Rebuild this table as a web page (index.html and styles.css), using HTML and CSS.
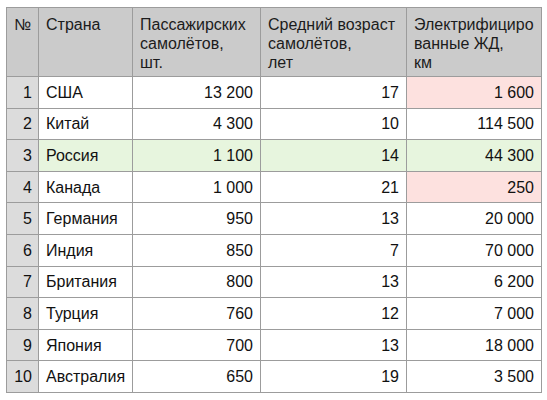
FILE: index.html
```html
<!DOCTYPE html>
<html lang="ru">
<head>
<meta charset="utf-8">
<link rel="stylesheet" href="styles.css">
</head>
<body>
<table class="stats">
  <colgroup>
    <col class="c-num"><col class="c-country"><col class="c-planes"><col class="c-age"><col class="c-rail">
  </colgroup>
  <thead>
    <tr>
      <th>№</th>
      <th>Страна</th>
      <th>Пассажирских<br>самолётов,<br>шт.</th>
      <th>Средний возраст<br>самолётов,<br>лет</th>
      <th>Электрифициро<br>ванные ЖД,<br>км</th>
    </tr>
  </thead>
  <tbody>
    <tr><td class="idx">1</td><td>США</td><td class="n">13 200</td><td class="n">17</td><td class="n bad">1 600</td></tr>
    <tr><td class="idx">2</td><td>Китай</td><td class="n">4 300</td><td class="n">10</td><td class="n">114 500</td></tr>
    <tr class="good"><td class="idx">3</td><td>Россия</td><td class="n">1 100</td><td class="n">14</td><td class="n">44 300</td></tr>
    <tr><td class="idx">4</td><td>Канада</td><td class="n">1 000</td><td class="n">21</td><td class="n bad">250</td></tr>
    <tr><td class="idx">5</td><td>Германия</td><td class="n">950</td><td class="n">13</td><td class="n">20 000</td></tr>
    <tr><td class="idx">6</td><td>Индия</td><td class="n">850</td><td class="n">7</td><td class="n">70 000</td></tr>
    <tr><td class="idx">7</td><td>Британия</td><td class="n">800</td><td class="n">13</td><td class="n">6 200</td></tr>
    <tr><td class="idx">8</td><td>Турция</td><td class="n">760</td><td class="n">12</td><td class="n">7 000</td></tr>
    <tr><td class="idx">9</td><td>Япония</td><td class="n">700</td><td class="n">13</td><td class="n">18 000</td></tr>
    <tr><td class="idx">10</td><td>Австралия</td><td class="n">650</td><td class="n">19</td><td class="n">3 500</td></tr>
  </tbody>
</table>
</body>
</html>
```
FILE: styles.css
```css
html, body {
  margin: 0;
  background: #ffffff;
}
body {
  font-family: "Liberation Sans", Arial, sans-serif;
  font-size: 16px;
  color: #111111;
}
.stats {
  border-collapse: collapse;
  table-layout: fixed;
  width: 535px;
  margin: 7px 0 0 6px;
}
.c-num { width: 32px; }
.c-country { width: 94px; }
.c-planes { width: 128px; }
.c-age { width: 146px; }
.c-rail { width: 135px; }
.stats th, .stats td {
  border: 1px solid #9c9c9c;
  white-space: nowrap;
  overflow: hidden;
}
.stats th {
  background: #cbcbcb;
  color: #1c1c1c;
  font-weight: normal;
  text-align: left;
  vertical-align: top;
  line-height: 19px;
  padding: 7px 7px 0 7px;
  height: 61px;
}
.stats td {
  height: 30.6px;
  padding: 0 7px;
  vertical-align: middle;
  line-height: 19px;
}
.stats td.idx {
  background: #dcdcdc;
  text-align: right;
  padding: 0 6px 0 0;
}
.stats td.n {
  text-align: right;
}
.stats tr.good td {
  background: #e7f5de;
}
.stats tr.good td.idx {
  background: #dcdcdc;
}
.stats td.bad {
  background: #fde1df;
}
```
